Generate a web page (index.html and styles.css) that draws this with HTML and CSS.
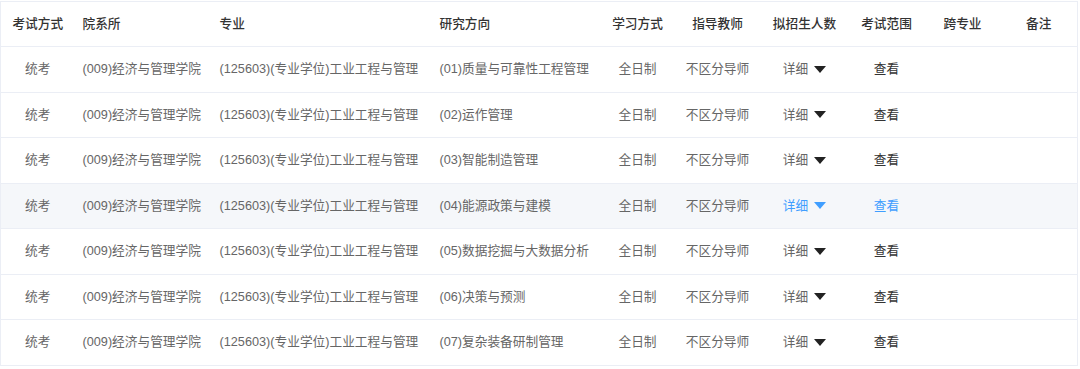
FILE: index.html
```html
<!DOCTYPE html>
<html lang="zh-CN">
<head>
<meta charset="utf-8">
<title>招生专业目录</title>
<link rel="stylesheet" href="styles.css">
</head>
<body>
<div class="wrap">
<table class="plan">
  <colgroup>
    <col class="c1"><col class="c2"><col class="c3"><col class="c4"><col class="c5">
    <col class="c6"><col class="c7"><col class="c8"><col class="c9"><col class="c10">
  </colgroup>
  <thead>
    <tr>
      <th class="center">考试方式</th>
      <th>院系所</th>
      <th>专业</th>
      <th>研究方向</th>
      <th class="center">学习方式</th>
      <th class="center">指导教师</th>
      <th class="center">拟招生人数</th>
      <th class="center">考试范围</th>
      <th class="center">跨专业</th>
      <th class="center">备注</th>
    </tr>
  </thead>
  <tbody>
    <tr>
      <td class="center">统考</td><td>(009)经济与管理学院</td><td>(125603)(专业学位)工业工程与管理</td><td>(01)质量与可靠性工程管理</td>
      <td class="center">全日制</td><td class="center">不区分导师</td>
      <td class="center"><span class="detail">详细<i class="tri"></i></span></td>
      <td class="center"><span class="view">查看</span></td><td></td><td></td>
    </tr>
    <tr>
      <td class="center">统考</td><td>(009)经济与管理学院</td><td>(125603)(专业学位)工业工程与管理</td><td>(02)运作管理</td>
      <td class="center">全日制</td><td class="center">不区分导师</td>
      <td class="center"><span class="detail">详细<i class="tri"></i></span></td>
      <td class="center"><span class="view">查看</span></td><td></td><td></td>
    </tr>
    <tr>
      <td class="center">统考</td><td>(009)经济与管理学院</td><td>(125603)(专业学位)工业工程与管理</td><td>(03)智能制造管理</td>
      <td class="center">全日制</td><td class="center">不区分导师</td>
      <td class="center"><span class="detail">详细<i class="tri"></i></span></td>
      <td class="center"><span class="view">查看</span></td><td></td><td></td>
    </tr>
    <tr class="hover">
      <td class="center">统考</td><td>(009)经济与管理学院</td><td>(125603)(专业学位)工业工程与管理</td><td>(04)能源政策与建模</td>
      <td class="center">全日制</td><td class="center">不区分导师</td>
      <td class="center"><span class="detail">详细<i class="tri"></i></span></td>
      <td class="center"><span class="view">查看</span></td><td></td><td></td>
    </tr>
    <tr>
      <td class="center">统考</td><td>(009)经济与管理学院</td><td>(125603)(专业学位)工业工程与管理</td><td>(05)数据挖掘与大数据分析</td>
      <td class="center">全日制</td><td class="center">不区分导师</td>
      <td class="center"><span class="detail">详细<i class="tri"></i></span></td>
      <td class="center"><span class="view">查看</span></td><td></td><td></td>
    </tr>
    <tr>
      <td class="center">统考</td><td>(009)经济与管理学院</td><td>(125603)(专业学位)工业工程与管理</td><td>(06)决策与预测</td>
      <td class="center">全日制</td><td class="center">不区分导师</td>
      <td class="center"><span class="detail">详细<i class="tri"></i></span></td>
      <td class="center"><span class="view">查看</span></td><td></td><td></td>
    </tr>
    <tr>
      <td class="center">统考</td><td>(009)经济与管理学院</td><td>(125603)(专业学位)工业工程与管理</td><td>(07)复杂装备研制管理</td>
      <td class="center">全日制</td><td class="center">不区分导师</td>
      <td class="center"><span class="detail">详细<i class="tri"></i></span></td>
      <td class="center"><span class="view">查看</span></td><td></td><td></td>
    </tr>
  </tbody>
</table>
</div>
</body>
</html>
```
FILE: styles.css
```css
html, body {
  margin: 0;
  padding: 0;
  background: #fff;
}
body {
  font-family: "Liberation Sans", "Noto Sans CJK SC", sans-serif;
  font-size: 12.7px;
  color: #666;
}
.wrap {
  padding-top: 1px;
}
.plan {
  border-collapse: collapse;
  table-layout: fixed;
  width: 1077px;
  border: 1px solid #ebeef5;
}
.c1 { width: 74px; }
.c2 { width: 137px; }
.c3 { width: 220px; }
.c4 { width: 169px; }
.c5 { width: 74px; }
.c6 { width: 86px; }
.c7 { width: 88px; }
.c8 { width: 76px; }
.c9 { width: 76px; }
.c10 { width: 77px; }
.plan th,
.plan td {
  padding: 0 8px;
  text-align: left;
  white-space: nowrap;
  border-bottom: 1px solid #ebeef5;
  line-height: 20px;
}
.plan th {
  height: 44px;
  font-weight: 500;
  color: #333;
}
.plan td {
  height: 44.5px;
}
.plan th.center,
.plan td.center {
  text-align: center;
  padding: 0;
}
.plan tr.hover td {
  background: #f5f7fa;
}
.detail {
  display: inline-flex;
  align-items: center;
  gap: 6px;
  color: #666;
}
.tri {
  display: inline-block;
  width: 0;
  height: 0;
  border-left: 6px solid transparent;
  border-right: 6px solid transparent;
  border-top: 7px solid #222;
}
.view {
  color: #333;
}
.hover .detail,
.hover .view {
  color: #409eff;
}
.hover .tri {
  border-top-color: #409eff;
}
```
